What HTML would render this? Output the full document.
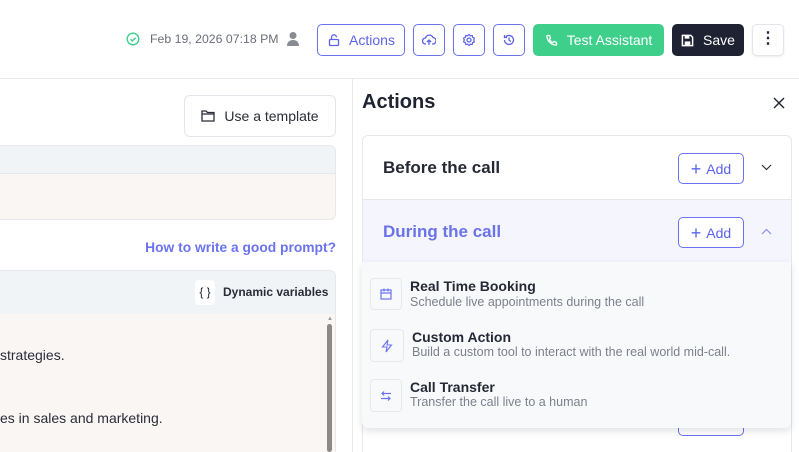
<!DOCTYPE html>
<html><head><style>
*{box-sizing:border-box;margin:0;padding:0}
html,body{width:799px;height:452px;overflow:hidden}
body{background:#fff;font-family:"Liberation Sans",sans-serif;color:#1f2230;position:relative}
.abs{position:absolute}
.btn{position:absolute;border:1px solid #6b73f0;border-radius:5px;background:#fff;color:#5a63e8;display:flex;align-items:center;justify-content:center}
</style></head><body>
<div class="abs" style="left:0;top:78px;width:799px;height:1px;background:#e8e9ee"></div>
<svg class="abs" style="left:126px;top:32px" width="14" height="14" viewBox="0 0 14 14"><circle cx="7" cy="7" r="5.8" fill="none" stroke="#3dd08a" stroke-width="1.4"/><path d="M4.5 7.2l1.8 1.8 3.3-3.4" fill="none" stroke="#3dd08a" stroke-width="1.4"/></svg>
<div class="abs" style="left:150px;top:32px;font-size:12.3px;color:#6b6f7a">Feb 19, 2026 07:18 PM</div>
<svg class="abs" style="left:286px;top:31px" width="14" height="16" viewBox="0 0 14 16"><circle cx="7" cy="4.5" r="3.5" fill="#888b94"/><path d="M1 15c0-4 2.5-6 6-6s6 2 6 6z" fill="#888b94"/></svg>
<div class="btn" style="left:317px;top:24px;width:88px;height:32px;font-size:14px"><svg width="14" height="14" viewBox="0 0 14 14" style="margin-right:8px"><rect x="2.5" y="6.5" width="9" height="6" rx="1" fill="none" stroke="#5a63e8" stroke-width="1.3"/><path d="M4.5 6.5V4.3a2.5 2.5 0 0 1 5 0" fill="none" stroke="#5a63e8" stroke-width="1.3"/></svg>Actions</div>
<div class="btn" style="left:413px;top:24px;width:32px;height:32px"><svg width="14" height="14" viewBox="0 0 14 14"><path d="M4 11H3.5a3 3 0 0 1 0-6 4 4 0 0 1 7.5-.5A3 3 0 0 1 10.5 11H10" fill="none" stroke="#5a63e8" stroke-width="1.3"/><path d="M7 12V7M5 9l2-2 2 2" fill="none" stroke="#5a63e8" stroke-width="1.3"/></svg></div>
<div class="btn" style="left:453px;top:24px;width:32px;height:32px"><svg width="14" height="14" viewBox="0 0 14 14"><circle cx="7" cy="7" r="2" fill="none" stroke="#5a63e8" stroke-width="1.3"/><path d="M7 1.5l1.3 1.3 1.900-.3.5 1.8 1.7.9-.7 1.8.7 1.8-1.7.9-.5 1.8-1.9-.3L7 12.5l-1.3-1.3-1.9.3-.5-1.8-1.7-.9L2.3 7l-.7-1.8 1.7-.9.5-1.8 1.9.3z" fill="none" stroke="#5a63e8" stroke-width="1.2"/></svg></div>
<div class="btn" style="left:493px;top:24px;width:32px;height:32px"><svg width="14" height="14" viewBox="0 0 14 14"><path d="M2.5 7a4.5 4.5 0 1 0 1.3-3.2M2.5 2v2.5H5" fill="none" stroke="#5a63e8" stroke-width="1.3"/><path d="M7 4.5V7l1.8 1.5" fill="none" stroke="#5a63e8" stroke-width="1.3"/></svg></div>
<div class="abs" style="left:533px;top:24px;width:131px;height:32px;background:#3ecf8b;border-radius:5px;color:#fff;font-size:14px;display:flex;align-items:center;justify-content:center"><svg width="13" height="13" viewBox="0 0 14 14" style="margin-right:9px"><path d="M3 1.5l2 .3 1 2.7-1.3 1a7 7 0 0 0 3.8 3.8l1-1.3 2.7 1 .3 2c0 .5-.5 1-1 1A10.5 10.5 0 0 1 2 2.5c0-.5.5-1 1-1z" fill="none" stroke="#fff" stroke-width="1.4"/></svg>Test Assistant</div>
<div class="abs" style="left:672px;top:24px;width:72px;height:32px;background:#1f2233;border-radius:5px;color:#fff;font-size:14px;display:flex;align-items:center;justify-content:center"><svg width="13" height="13" viewBox="0 0 14 14" style="margin-right:9px"><path d="M1.5 1.5h9l2 2v9h-11z" fill="none" stroke="#fff" stroke-width="1.6"/><rect x="4" y="8" width="6" height="4" fill="#fff"/><rect x="4" y="2" width="5" height="3" fill="#fff"/></svg>Save</div>
<div class="abs" style="left:752px;top:24px;width:32px;height:32px;border:1px solid #e3e5ea;border-radius:5px;box-shadow:0 1px 2px rgba(0,0,0,.08);text-align:center;font-size:16px;line-height:28px;font-weight:bold">⋮</div>

<div class="abs" style="left:352px;top:79px;width:1px;height:373px;background:#e8e9ee"></div>
<div class="abs" style="left:184px;top:95px;width:152px;height:42px;border:1px solid #e3e5ea;border-radius:6px;display:flex;align-items:center;justify-content:center;font-size:14px;color:#2a2d38"><svg width="14" height="12" viewBox="0 0 14 12" style="margin-right:9px"><path d="M1 1h4l1.5 1.5H13V11H1z M1 4h12" fill="none" stroke="#2a2d38" stroke-width="1.3"/></svg>Use a template</div>
<div class="abs" style="left:-5px;top:145px;width:341px;height:75px;border:1px solid #e6e8ec;border-radius:6px;overflow:hidden;background:#f9f6f3"><div style="height:28px;background:#f1f4f7;border-bottom:1px solid #e6e8ec"></div></div>
<div class="abs" style="right:463px;top:240px;font-size:13.8px;color:#6b73f0;font-weight:bold">How to write a good prompt?</div>
<div class="abs" style="left:-5px;top:270px;width:341px;height:190px;border:1px solid #e6e8ec;border-radius:6px;overflow:hidden;background:#f9f6f3"><div style="height:43px;background:#f1f4f7;position:relative"><div style="position:absolute;left:199px;top:9px;width:20px;height:25px;background:#fff;border-radius:4px;font-size:12px;text-align:center;line-height:25px">{ }</div><div style="position:absolute;left:227px;top:14px;font-size:12px;font-weight:bold;color:#2a2d38">Dynamic variables</div></div></div>
<div class="abs" style="left:0;top:347px;font-size:14px;color:#2a2d38">strategies.</div>
<div class="abs" style="left:0;top:410px;font-size:14px;color:#2a2d38">es in sales and marketing.</div>
<div class="abs" style="left:327px;top:324px;width:5px;height:128px;background:#8a8a8a;border-radius:3px"></div>
<div class="abs" style="left:327px;top:316px;font-size:6px;color:#999">▲</div>

<div class="abs" style="left:362px;top:91px;font-size:20px;font-weight:bold;color:#1f2230">Actions</div>
<svg class="abs" style="left:773px;top:97px" width="12" height="12" viewBox="0 0 12 12"><path d="M1 1l10 10M11 1L1 11" stroke="#1f2230" stroke-width="1.4"/></svg>
<div class="abs" style="left:362px;top:135px;width:430px;height:330px;border:1px solid #e6e8ec;border-radius:6px;overflow:hidden">
 <div style="height:64px;border-bottom:1px solid #e6e8ec;position:relative"><div style="position:absolute;left:20px;top:22px;font-size:17px;font-weight:bold;color:#262935">Before the call</div>
  <div class="btn" style="left:315px;top:17px;width:66px;height:31px;font-size:14px"><span style="font-size:18px;margin-right:5px;line-height:18px">+</span>Add</div>
  <svg style="position:absolute;left:398px;top:28px" width="11" height="7" viewBox="0 0 11 7"><path d="M1 1l4.5 4.5L10 1" fill="none" stroke="#333" stroke-width="1.2"/></svg></div>
 <div style="height:63px;background:#f4f5fd;position:relative"><div style="position:absolute;left:20px;top:22px;font-size:17px;font-weight:bold;color:#6b73e8">During the call</div>
  <div class="btn" style="left:315px;top:17px;width:66px;height:31px;font-size:14px"><span style="font-size:18px;margin-right:5px;line-height:18px">+</span>Add</div>
  <svg style="position:absolute;left:398px;top:28px" width="11" height="7" viewBox="0 0 11 7"><path d="M1 6l4.5-4.5L10 6" fill="none" stroke="#8a90ee" stroke-width="1.2"/></svg></div>
 <div class="btn" style="left:315px;top:285px;width:66px;height:15px"></div>
</div>
<div class="abs" style="left:362px;top:262px;width:429px;height:166px;background:#f8f9fb;border-radius:0 0 6px 6px;box-shadow:0 3px 8px rgba(0,0,0,.12)">
 <div class="abs" style="left:8px;top:16px;width:32px;height:32px;border:1px solid #e6e8ec;border-radius:4px;display:flex;align-items:center;justify-content:center"><svg width="12" height="12" viewBox="0 0 12 12"><rect x="1" y="2" width="10" height="9" fill="none" stroke="#6b73f0" stroke-width="1.2"/><path d="M1 5h10M4 .5v3M8 .5v3" stroke="#6b73f0" stroke-width="1.2"/></svg></div>
 <div class="abs" style="left:48px;top:16px;font-size:14px;font-weight:bold;color:#262935">Real Time Booking</div>
 <div class="abs" style="left:48px;top:33px;font-size:12.5px;color:#7d818c">Schedule live appointments during the call</div>
 <div class="abs" style="left:8px;top:67px;width:34px;height:33px;border:1px solid #e6e8ec;border-radius:4px;display:flex;align-items:center;justify-content:center"><svg width="12" height="14" viewBox="0 0 12 14"><path d="M7 1L1.5 8H6l-1 5 5.5-7H6z" fill="none" stroke="#6b73f0" stroke-width="1.1"/></svg></div>
 <div class="abs" style="left:50px;top:67px;font-size:14px;font-weight:bold;color:#262935">Custom Action</div>
 <div class="abs" style="left:50px;top:83px;font-size:12.5px;color:#7d818c">Build a custom tool to interact with the real world mid-call.</div>
 <div class="abs" style="left:8px;top:117px;width:32px;height:33px;border:1px solid #e6e8ec;border-radius:4px;display:flex;align-items:center;justify-content:center"><svg width="12" height="12" viewBox="0 0 12 12"><path d="M11 3.5H2M4 1.5l-2 2 2 2M1 8.5h9M8 6.5l2 2-2 2" fill="none" stroke="#6b73f0" stroke-width="1.2"/></svg></div>
 <div class="abs" style="left:48px;top:117px;font-size:14px;font-weight:bold;color:#262935">Call Transfer</div>
 <div class="abs" style="left:48px;top:133px;font-size:12.5px;color:#7d818c">Transfer the call live to a human</div>
</div>
</body></html>
